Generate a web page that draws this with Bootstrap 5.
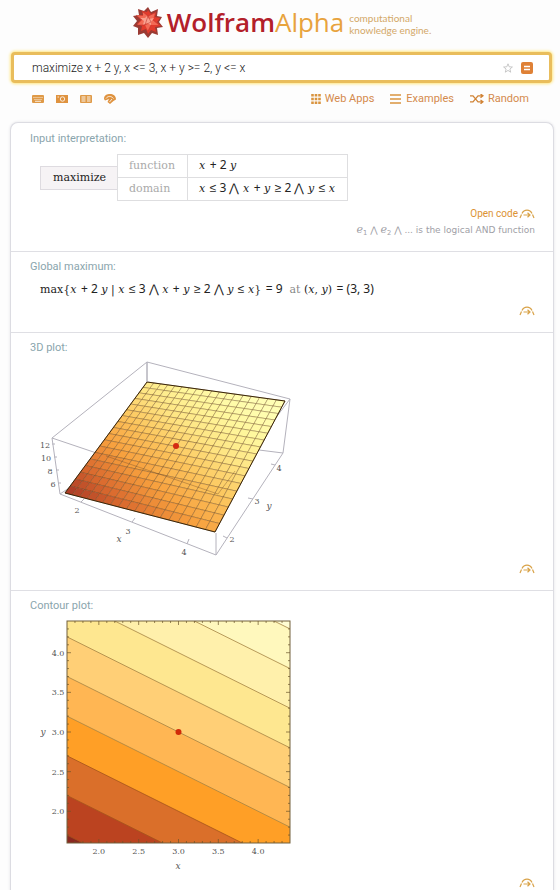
<!DOCTYPE html>
<html lang="en">
<head>
<meta charset="utf-8">
<meta name="viewport" content="width=device-width, initial-scale=1">
<title>maximize x + 2 y - WolframAlpha</title>
<link rel="stylesheet" href="https://cdn.jsdelivr.net/npm/bootstrap@5.3.0/dist/css/bootstrap.min.css">
<style>
body { font-family: Roboto, "Liberation Sans", sans-serif; font-size: 11px; line-height: 16px; background: #fdfdfd; color: #333; }
a { text-decoration: none; color: #d48a4c; }
svg { display: block; flex: none; }
.page { padding: 0 6px 0 10px; }
.brand { height: 44px; font-family: "Open Sans", sans-serif; font-size: 26px; line-height: 40px; }
.brand-w { color: #b3202a; font-weight: 600; }
.brand-a { color: #e8a33d; font-weight: 500; }
.tagline { font-family: Lato, sans-serif; font-size: 10px; line-height: 12px; color: #d3a868; padding: 3px 0 0 5px; }
.query { margin: 8px 2px 0 1px; height: 31px; background: #fff; border: 3px solid #e9bd5c; border-radius: 4px; box-shadow: 0 0 3px 1px #ffe680; padding: 0 16px 0 18px; }
.query input { font-size: 12px; font-weight: 300; color: #222; background: none; min-width: 0; outline: 0; }
.tools { height: 39px; padding: 0 25px 8px 22px; }
.tools .btn, .query .btn { line-height: 0; border: 0; }
.tools a { gap: 4px; }
.results { border: 1px solid #dcdce2; border-radius: 8px 8px 0 0; border-bottom: 0; box-shadow: 0 0 3px #e2e2e6; background: #fff; }
.pod { padding: 7px 18px 13px 19px; border-bottom: 1px solid #dfdfe4; }
.pod:first-child { padding-top: 8px; }
.pod:last-child { border: 0; padding-bottom: 0; }
.pod h2 { font-size: 11px; line-height: 16px; font-weight: 400; margin: 0; color: #8aa5ad; }
.pod-foot { margin-top: 5px; min-height: 16px; }
.open-code { color: #dc9233; font-size: 10px; gap: 1px; }
.note { font-family: "DejaVu Sans", sans-serif; font-size: 9px; color: #a0a0a6; }
.math { font-family: "DejaVu Serif", serif; font-size: 11px; color: #222; white-space: nowrap; }
.math b { font-family: "Noto Sans", sans-serif; font-size: 12px; font-weight: 400; line-height: 1; padding-left: 1px; }
.math-block { margin: 7px 0 0 10px; }
.keyword { background: #f6f3f5; border: 1px solid #dedbe0; border-right: 0; padding: 3px 11px 3px 12px; }
.spec { border-collapse: collapse; }
.spec th, .spec td { border: 1px solid #dedee0; height: 23px; padding: 0 12px 0 11px; font-weight: 400; }
.spec th { color: #aaa; }
.plot { margin-left: 10px; max-width: 100%; }
.plot text { font-family: "DejaVu Serif", serif; font-size: 8px; fill: #555; text-anchor: middle; }
.plot .axis { font-style: italic; font-size: 9px; }
</style>
<script src="https://cdn.jsdelivr.net/npm/bootstrap@5.3.0/dist/js/bootstrap.bundle.min.js"></script>
</head>
<body>
<svg width="0" height="0" class="position-absolute" aria-hidden="true">
  <symbol id="cloud" viewBox="0 0 16 10"><g fill="none" stroke="#d9a349" stroke-width="1.2"><path d="M1 9l1.5-3.500M3 4.500C5 0 11 0 13 4.500M13.500 5.500L15 9"/><path d="M4.500 6h6M8.500 3.700L11 6 8.500 8.300"/></g></symbol>
</svg>
<div class="page container-fluid">
  <header class="brand d-flex justify-content-center align-items-center">
    <svg width="30" height="32" viewBox="0 0 30 32" class="me-1" aria-hidden="true">
      <path fill="#9a3b34" d="M15 1l3 5 7-3-1 7 5 1-3 5 4 5-6 1 1 7-6-2-4 5-4-5-6 2 0-7-5-2 4-5-4-5 6-1-1-6 6 2z"/>
      <path fill="#e23b2c" d="M15 4l3 4 5-2-1 5 5 1-3 4 4 4-6 1 1 5-5-2-3 4-2-5-5 2 1-5-5-2 4-4-4-4 6-1-1-4 5 1z"/>
      <path fill="#f36a55" d="M10 6l5 4 7-3-2 7 6 5-8 0-3 6-3-6-8 0 5-5-6-5 7 1z"/>
      <path fill="#f9a08e" d="M14 10l2 3 5-1-3 4 0 3-4-2-4 2 1-4-4-3 5 0z"/>
      <path fill="none" stroke="#b92f28" stroke-width=".5" d="M15 10l-5-4M15 10l7-3M20 14l6 5M18 19l-3 6M12 19l-8 0M9 14l-6-5M15 10l3 6-6 3 3-9"/>
    </svg>
    <span class="brand-w">Wolfram</span><span class="brand-a">Alpha</span>
    <div class="tagline">computational<br>knowledge engine.</div>
  </header>

  <form class="query d-flex align-items-center" onsubmit="return false">
    <input class="border-0 p-0 flex-grow-1" type="text" aria-label="Query" value="maximize x + 2 y, x &lt;= 3, x + y &gt;= 2, y &lt;= x">
    <button type="button" class="btn p-0 me-2" aria-label="Favorite"><svg width="10" height="10" viewBox="0 0 10 10"><path d="M5 .8l1.200 3 3.200.2-2.500 2 .8 3.200L5 7.400 2.300 9.200l.8-3.200L.6 4l3.200-.2z" fill="none" stroke="#bbb" stroke-width=".8"/></svg></button>
    <button type="submit" class="btn p-0" aria-label="Compute"><svg width="12" height="12" viewBox="0 0 12 12"><rect width="12" height="12" rx="2" fill="#df8136"/><path d="M3 4.500h6M3 7.500h6" stroke="#fff" stroke-width="1.500"/></svg></button>
  </form>

  <nav class="tools d-flex align-items-center">
    <div class="d-flex align-items-center me-auto">
      <button type="button" class="btn p-0 me-2 pe-1" aria-label="Keyboard"><svg width="12" height="8" viewBox="0 0 12 8"><rect width="12" height="8" rx="1" fill="#df9a48"/><path d="M1.500 2.500h9M2.500 4.500h8" stroke="#fff" stroke-width=".8" stroke-dasharray="1 1"/><path d="M3 6.300h6" stroke="#fff" stroke-width=".8"/></svg></button>
      <button type="button" class="btn p-0 me-2 pe-1" aria-label="Image"><svg width="12" height="8" viewBox="0 0 12 8"><path d="M0 0h12v8H0z" fill="#df9340"/><circle cx="6.500" cy="4" r="2.200" fill="none" stroke="#fff" stroke-width=".8"/><path d="M1.500 2h1.500" stroke="#fff" stroke-width=".8"/></svg></button>
      <button type="button" class="btn p-0 me-2 pe-1" aria-label="Data"><svg width="12" height="8" viewBox="0 0 12 8"><rect width="12" height="8" rx="1" fill="#df9a48"/><path d="M1.500 2h4M7 2h3.500M1.500 4h4M7 4h3.500M1.500 6h4M7 6h3.500" stroke="#fff" stroke-width=".9"/></svg></button>
      <button type="button" class="btn p-0" aria-label="File"><svg width="12" height="10" viewBox="0 0 12 10"><path d="M0 5C0 1 3 0 6 0s6 1.500 6 5.500L9.500 7 6 10 3.500 8 5 5 1 6.500z" fill="#df9340"/><path d="M2 4.500C4 1.500 7.500 2 9.500 4.500M5.500 8L8 5" fill="none" stroke="#fff" stroke-width=".8"/></svg></button>
    </div>
    <a href="#" class="d-flex align-items-center"><svg width="10" height="10" viewBox="0 0 10 10"><path d="M1.500 0v10M5 0v10M8.500 0v10" stroke="#d9943f" stroke-width="2.600" stroke-dasharray="2.600 1.100"/></svg>Web Apps</a>
    <a href="#" class="d-flex align-items-center ms-3"><svg width="12" height="10" viewBox="0 0 12 10"><path d="M0 1h11M0 5h11M0 9h11" stroke="#d9943f" stroke-width="1.300"/></svg>Examples</a>
    <a href="#" class="d-flex align-items-center ms-3"><svg width="14" height="10" viewBox="0 0 14 10"><path d="M0 1.800h3l5 6h5M0 7.800h3l5-6h5M10.500 0L13 1.800l-2.500 2M10.500 6L13 7.800l-2.500 2" fill="none" stroke="#d08335" stroke-width="1.300"/></svg>Random</a>
  </nav>

  <main class="results">
    <section class="pod">
      <h2>Input interpretation:</h2>
      <div class="math math-block d-flex align-items-center">
        <span class="keyword">maximize</span>
        <table class="spec">
          <tr><th scope="row">function</th><td><i>x</i> <b>+ 2</b> <i>y</i></td></tr>
          <tr><th scope="row">domain</th><td><i>x</i> <b>≤ 3 ⋀</b> <i>x</i> <b>+</b> <i>y</i> <b>≥ 2 ⋀</b> <i>y</i> <b>≤</b> <i>x</i></td></tr>
        </table>
      </div>
      <div class="pod-foot d-flex justify-content-end"><a href="#" class="open-code d-flex align-items-center">Open code<svg width="16" height="10"><use href="#cloud"/></svg></a></div>
      <div class="note text-end"><i class="math text-reset">e</i><sub>1</sub> ⋀ <i class="math text-reset">e</i><sub>2</sub> ⋀ ... is the logical AND function</div>
    </section>

    <section class="pod">
      <h2>Global maximum:</h2>
      <div class="math math-block">max{<i>x</i> <b>+ 2</b> <i>y</i> | <i>x</i> <b>≤ 3 ⋀</b> <i>x</i> <b>+</b> <i>y</i> <b>≥ 2 ⋀</b> <i>y</i> <b>≤</b> <i>x</i>} <b>= 9</b>&nbsp; <span class="text-black-50">at</span> (<i>x</i>, <i>y</i>) <b>= (3, 3)</b></div>
      <div class="pod-foot d-flex justify-content-end align-items-center"><a href="#" aria-label="Open code"><svg width="16" height="10"><use href="#cloud"/></svg></a></div>
    </section>

    <section class="pod">
      <h2>3D plot:</h2>
      <svg id="surface" class="plot" width="260" height="200" viewBox="0 0 260 200" role="img" aria-label="3D plot"></svg>
      <div class="pod-foot d-flex justify-content-end align-items-center"><a href="#" aria-label="Open code"><svg width="16" height="10"><use href="#cloud"/></svg></a></div>
    </section>

    <section class="pod">
      <h2>Contour plot:</h2>
      <svg id="contour" class="plot" width="260" height="256" viewBox="0 0 260 256" role="img" aria-label="Contour plot"></svg>
      <div class="pod-foot d-flex justify-content-end align-items-center"><a href="#" aria-label="Open code"><svg width="16" height="10"><use href="#cloud"/></svg></a></div>
    </section>
  </main>
</div>
<script>
const LO = 1.6, HI = 4.4;
const line = (x1, y1, x2, y2, c, w = 1) => `<path d="M${x1} ${y1}L${x2} ${y2}" stroke="${c}" stroke-width="${w}" fill="none"/>`;
const label = (x, y, t, cls = "") => `<text x="${x}" y="${y}" class="${cls}">${t}</text>`;

// Surface z = x + 2y, projected through the perspective map of its four corners.
(function () {
  const [x0, y0] = [25, 137], [x1, y1] = [175, 176], [x2, y2] = [245, 45], [x3, y3] = [107, 26];
  const dx1 = x1 - x2, dx2 = x3 - x2, sx = x0 - x1 + x2 - x3;
  const dy1 = y1 - y2, dy2 = y3 - y2, sy = y0 - y1 + y2 - y3;
  const den = dx1 * dy2 - dx2 * dy1;
  const g = (sx * dy2 - dx2 * sy) / den, h = (dx1 * sy - sx * dy1) / den;
  const P = (u, v) => {
    const w = g * u + h * v + 1;
    return [((x1 - x0 + g * x1) * u + (x3 - x0 + h * x3) * v + x0) / w,
            ((y1 - y0 + g * y1) * u + (y3 - y0 + h * y3) * v + y0) / w];
  };
  const stops = [[165, 52, 38], [218, 106, 46], [247, 160, 62], [252, 196, 92], [254, 228, 130], [255, 247, 156], [255, 254, 180]];
  const shade = t => {
    const k = Math.min(t * 6.6, 5.999), i = Math.floor(k), f = k - i;
    return `rgb(${stops[i].map((c, j) => Math.round(c + (stops[i + 1][j] - c) * f))})`;
  };
  const box = "#b4b2bc";
  let s = "";
  s += line(107, 6, 107, 80, box) + line(107, 80, 243, 97, box) + line(107, 80, 20, 138, box);
  s += line(12, 82, 178, 138, box) + line(178, 138, 250, 43, box);
  const n = 18;
  for (let j = n - 1; j >= 0; j--) for (let i = 0; i < n; i++) {
    const q = [P(i / n, j / n), P((i + 1) / n, j / n), P((i + 1) / n, (j + 1) / n), P(i / n, (j + 1) / n)];
    const c = shade(((i + .5) / n + 2 * (j + .5) / n) / 3);
    s += `<polygon points="${q.join(" ")}" fill="${c}" stroke="#654018" stroke-opacity=".7" stroke-width=".5"/>`;
  }
  s += `<polygon points="${[P(0, 0), P(1, 0), P(1, 1), P(0, 1)].join(" ")}" fill="none" stroke="#3a2508"/>`;
  s += `<path d="M66 100L178 138L195 115" fill="none" stroke="#77502a" stroke-opacity=".4"/>`;
  s += `<path d="M107 6L250 43L243 97L176 199L20 138L12 82ZM176 177V199" fill="none" stroke="${box}"/>`;
  s += line(107, 6, 107, 26, box);
  [[12, 88], [14, 101], [16, 114], [18, 127]].forEach(([x, y]) => s += line(x, y, x + 3, y, box));
  [[41, 146, 44, 143], [92, 166, 95, 162], [147, 188, 149, 183], [187, 182, 183, 180], [213, 143, 208, 142], [235, 109, 231, 108]].forEach(p => s += line(...p, box));
  s += `<circle cx="136" cy="90" r="3" fill="#d42a12"/>`;
  [[5, 92, 12], [6, 105, 10], [10, 118, 8], [13, 131, 6], [37, 157, 2], [88, 178, 3], [144, 199, 4], [192, 186, 2], [217, 148, 3], [239, 115, 4]].forEach(a => s += label(...a));
  s += label(79, 186, "x", "axis") + label(229, 153, "y", "axis");
  document.getElementById("surface").innerHTML = s;
})();

// Contours x + 2y = c on the square [1.6, 4.4].
(function () {
  const L = 27, T = 7, W = 223, H = 222;
  const X = x => L + (x - LO) / (HI - LO) * W, Y = y => T + (HI - y) / (HI - LO) * H;
  const fills = { 5: "#bb4320", 6: "#da6f2a", 7: "#ff9f26", 8: "#ffb653", 9: "#ffcf76", 10: "#fee790", 11: "#fff0ab", 12: "#fff8bd", 13: "#fffdd4" };
  let s = `<defs><clipPath id="frame"><rect x="${L}" y="${T}" width="${W}" height="${H}"/></clipPath></defs><g clip-path="url(#frame)"><rect x="${L}" y="${T}" width="${W}" height="${H}" fill="#8a2720"/>`;
  for (let c = 5; c <= 13; c++) {
    const a = [X(LO), Y((c - LO) / 2)], b = [X(HI), Y((c - HI) / 2)];
    s += `<polygon points="${a} ${b} ${L + W},-200 ${L},-200" fill="${fills[c]}"/>` + line(...a, ...b, c < 8 ? "#a3541c" : "#a58343", .8);
  }
  s += `</g><rect x="${L}" y="${T}" width="${W}" height="${H}" fill="none" stroke="#73603c"/>`;
  for (let k = 17; k < 44; k++) {
    const m = k % 5 ? 2 : 4, v = k / 10, c = "#6b552b";
    s += line(X(v), T, X(v), T + m, c, .7) + line(X(v), T + H, X(v), T + H - m, c, .7);
    s += line(L, Y(v), L + m, Y(v), c, .7) + line(L + W, Y(v), L + W - m, Y(v), c, .7);
  }
  [2, 2.5, 3, 3.5, 4].forEach(v => s += label(X(v), 240, v.toFixed(1)) + label(18, Y(v) + 3, v.toFixed(1)));
  s += label(138, 255, "x", "axis") + label(3, 121, "y", "axis");
  s += `<circle cx="${X(3)}" cy="${Y(3)}" r="3" fill="#d02a08"/>`;
  document.getElementById("contour").innerHTML = s;
})();
</script>
</body>
</html>
